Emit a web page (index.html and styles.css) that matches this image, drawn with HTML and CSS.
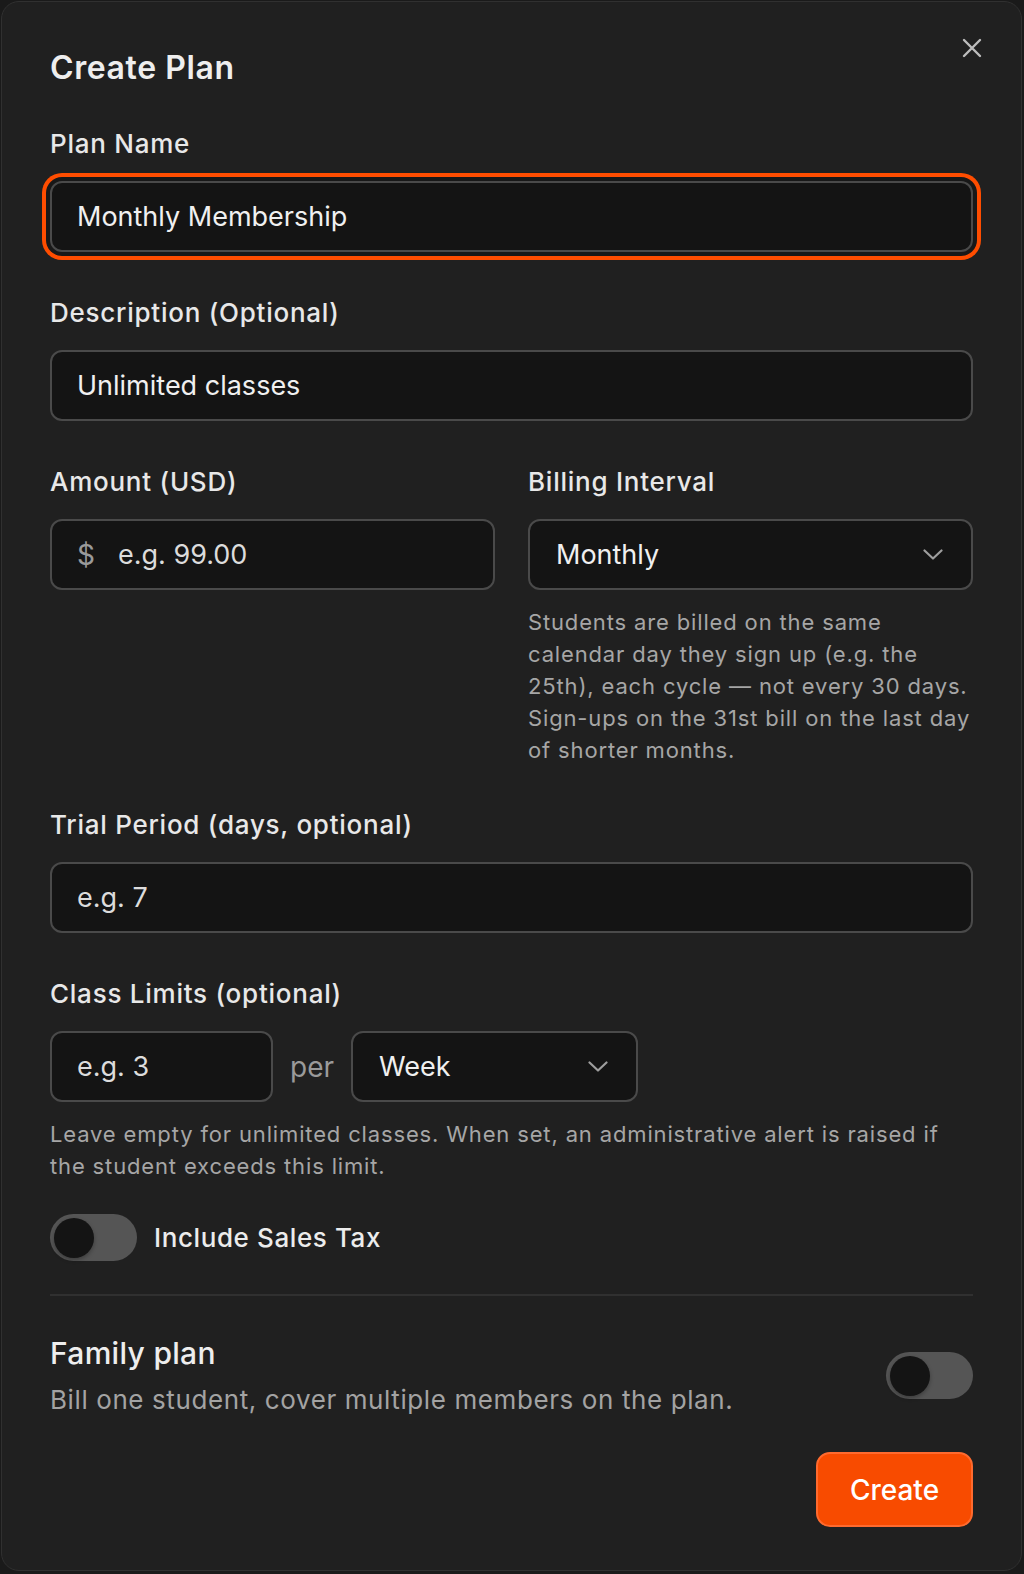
FILE: index.html
```html
<!DOCTYPE html>
<html lang="en">
<head>
<meta charset="utf-8">
<title>Create Plan</title>
<link rel="stylesheet" href="styles.css">
</head>
<body>
<div class="dialog">
  <button class="close" aria-label="Close">
    <svg width="20" height="20" viewBox="0 0 20 20"><path d="M2 2 L18 18 M18 2 L2 18" stroke="#bdbdbd" stroke-width="2.4" stroke-linecap="round" fill="none"/></svg>
  </button>
  <h1 class="title">Create Plan</h1>

  <div class="field">
    <label class="label">Plan Name</label>
    <div class="input focused"><input class="control" type="text" value="Monthly Membership"></div>
  </div>

  <div class="field">
    <label class="label">Description (Optional)</label>
    <div class="input"><input class="control" type="text" value="Unlimited classes"></div>
  </div>

  <div class="row field">
    <div class="col">
      <label class="label">Amount (USD)</label>
      <div class="input"><span class="prefix">$</span><input class="control" type="text" placeholder="e.g. 99.00"></div>
    </div>
    <div class="col">
      <label class="label">Billing Interval</label>
      <div class="input select"><span>Monthly</span>
        <svg class="chev" width="20" height="11" viewBox="0 0 20 11"><path d="M1.5 1.5 L10 9.5 L18.5 1.5" stroke="#9e9e9e" stroke-width="2.2" stroke-linecap="round" stroke-linejoin="round" fill="none"/></svg>
      </div>
      <p class="help">Students are billed on the same calendar day they sign up (e.g. the 25th), each cycle — not every 30 days. Sign-ups on the 31st bill on the last day of shorter months.</p>
    </div>
  </div>

  <div class="field after-row">
    <label class="label">Trial Period (days, optional)</label>
    <div class="input"><input class="control" type="text" placeholder="e.g. 7"></div>
  </div>

  <div class="field">
    <label class="label">Class Limits (optional)</label>
    <div class="limit-row">
      <div class="input limit"><input class="control" type="text" placeholder="e.g. 3"></div>
      <span class="per">per</span>
      <div class="input select week"><span>Week</span>
        <svg class="chev" width="20" height="11" viewBox="0 0 20 11"><path d="M1.5 1.5 L10 9.5 L18.5 1.5" stroke="#9e9e9e" stroke-width="2.2" stroke-linecap="round" stroke-linejoin="round" fill="none"/></svg>
      </div>
    </div>
    <p class="help">Leave empty for unlimited classes. When set, an administrative alert is raised if the student exceeds this limit.</p>
  </div>

  <div class="toggle-row">
    <div class="switch"><span class="knob"></span></div>
    <span class="toggle-label">Include Sales Tax</span>
  </div>

  <div class="divider"></div>

  <div class="family">
    <div class="family-text">
      <div class="family-title">Family plan</div>
      <div class="family-desc">Bill one student, cover multiple members on the plan.</div>
    </div>
    <div class="switch"><span class="knob"></span></div>
  </div>

  <div class="actions">
    <button class="primary">Create</button>
  </div>
</div>
</body>
</html>
```

FILE: styles.css
```css
* { box-sizing: border-box; }

html, body {
  margin: 0;
  padding: 0;
  background: #1a1a1a;
}

body {
  font-family: Inter, "Noto Sans", sans-serif;
  color: #ececec;
}

.dialog {
  position: relative;
  margin: 1px 2px 2px 1px;
  width: 1021px;
  background: #202020;
  border: 1px solid #303030;
  border-radius: 18px;
  padding: 46px 48px 43px 48px;
}

.close {
  position: absolute;
  top: 36px;
  right: 39px;
  width: 20px;
  height: 20px;
  padding: 0;
  border: none;
  background: none;
  display: flex;
}

.title {
  margin: 0 0 40px;
  font-size: 32px;
  line-height: 40px;
  font-weight: 600;
  letter-spacing: 0.6px;
  color: #eeeeee;
}

.field + .field { margin-top: 45px; }
.field.after-row { margin-top: 43px; }

.label {
  display: block;
  font-size: 26px;
  line-height: 32px;
  font-weight: 500;
  letter-spacing: 0.75px;
  color: #e8e8e8;
  margin-bottom: 21px;
}

.input {
  height: 71px;
  display: flex;
  align-items: center;
  padding: 0 25px;
  background: #141414;
  border: 2px solid #4a4a4a;
  border-radius: 12px;
  font-size: 27px;
  color: #f0f0f0;
}

.input.focused {
  box-shadow: 0 0 0 4px #181818, 0 0 0 8px #ff4d00;
}

.control {
  flex: 1;
  min-width: 0;
  width: 100%;
  height: 100%;
  padding: 0;
  border: none;
  outline: none;
  background: transparent;
  font: inherit;
  color: inherit;
}

.control::placeholder {
  color: #dcdcdc;
  opacity: 1;
}

.prefix {
  font-size: 28px;
  color: #9a9a9a;
  margin-right: 23px;
}

.row {
  display: grid;
  grid-template-columns: minmax(0, 1fr) minmax(0, 1fr);
  column-gap: 33px;
}

.col { min-width: 0; }

.select {
  justify-content: space-between;
  padding: 0 28px 0 26px;
}

.chev { flex: none; }

.help {
  margin: 16px 0 0;
  font-size: 22px;
  line-height: 32px;
  letter-spacing: 0.85px;
  color: #a6a6a6;
}

.limit-row {
  display: flex;
  align-items: center;
  gap: 17px;
}

.limit { width: 223px; flex: none; }
.week { width: 287px; flex: none; }

.per {
  font-size: 28px;
  color: #9a9a9a;
}

.toggle-row {
  margin-top: 32px;
  display: flex;
  align-items: center;
  gap: 17px;
}

.switch {
  width: 87px;
  height: 47px;
  flex: none;
  border-radius: 24px;
  background: #555555;
  display: flex;
  align-items: center;
  padding: 0 4px;
}

.knob {
  width: 40px;
  height: 40px;
  border-radius: 50%;
  background: #141414;
  box-shadow: 0 2px 4px rgba(0, 0, 0, 0.3);
}

.toggle-label {
  font-size: 26px;
  line-height: 32px;
  font-weight: 500;
  letter-spacing: 0.6px;
  color: #ececec;
}

.divider {
  margin-top: 33px;
  height: 2px;
  background: #303030;
}

.family {
  margin-top: 39px;
  display: flex;
  align-items: center;
  justify-content: space-between;
}

.family-title {
  font-size: 30px;
  line-height: 36px;
  font-weight: 500;
  letter-spacing: 0.3px;
  color: #eeeeee;
}

.family-desc {
  margin-top: 13px;
  font-size: 26px;
  line-height: 32px;
  letter-spacing: 0.6px;
  color: #a3a3a3;
}

.actions {
  margin-top: 36px;
  display: flex;
  justify-content: flex-end;
}

.primary {
  width: 157px;
  height: 75px;
  border: 2px solid #ff6a2e;
  border-radius: 14px;
  background: #f84b00;
  color: #ffffff;
  font-family: inherit;
  font-size: 28px;
  font-weight: 500;
}
```
